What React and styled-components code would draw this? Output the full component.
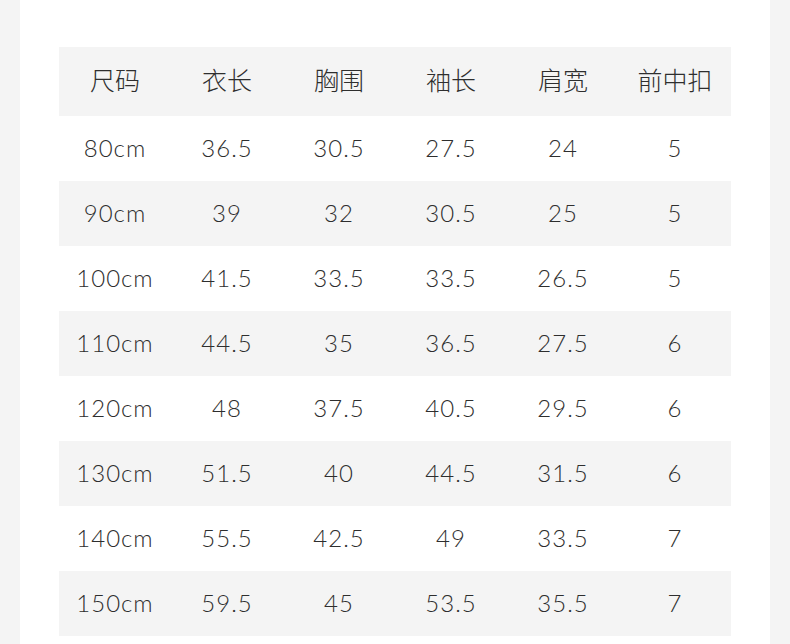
import React from 'react';
import styled, { createGlobalStyle } from 'styled-components';

const GlobalStyle = createGlobalStyle`
    body {
        margin: 0;
        background: #f4f4f4;
        font-family: Lato, "Noto Sans CJK SC", sans-serif;
    }
`;

const Page = styled.div`
    width: 750px;
    min-height: 644px;
    margin: 0 auto;
    background: #fff;
    padding-top: 47px;
    box-sizing: border-box;
    display: flex;
    justify-content: center;
`;

const Table = styled.div`
    width: 672px;
    display: flex;
    flex-direction: column;
`;

const Row = styled.div`
    display: grid;
    grid-template-columns: repeat(6, 1fr);
    height: ${p => (p.head ? '69px' : '65px')};
    background: ${p => (p.shaded ? '#f4f4f4' : '#fff')};
`;

const Cell = styled.div`
    display: flex;
    align-items: center;
    justify-content: center;
    color: #2e2e2e;
    font-size: ${p => (p.head ? '25px' : '24px')};
    font-weight: 300;
    letter-spacing: ${p => (p.head ? '0' : '1px')};
    padding-bottom: ${p => (p.head ? '5px' : '3px')};
`;

const headers = ['尺码', '衣长', '胸围', '袖长', '肩宽', '前中扣'];

const rows = [
    ['80cm', '36.5', '30.5', '27.5', '24', '5'],
    ['90cm', '39', '32', '30.5', '25', '5'],
    ['100cm', '41.5', '33.5', '33.5', '26.5', '5'],
    ['110cm', '44.5', '35', '36.5', '27.5', '6'],
    ['120cm', '48', '37.5', '40.5', '29.5', '6'],
    ['130cm', '51.5', '40', '44.5', '31.5', '6'],
    ['140cm', '55.5', '42.5', '49', '33.5', '7'],
    ['150cm', '59.5', '45', '53.5', '35.5', '7'],
];

export default function App() {
    return (
        <React.Fragment>
            <GlobalStyle />
            <Page>
                <Table>
                    <Row head shaded>
                        {headers.map(h => <Cell head key={h}>{h}</Cell>)}
                    </Row>
                    {rows.map((r, i) => (
                        <Row key={r[0]} shaded={i % 2 === 1}>
                            {r.map((v, j) => <Cell key={j}>{v}</Cell>)}
                        </Row>
                    ))}
                </Table>
            </Page>
        </React.Fragment>
    );
}
